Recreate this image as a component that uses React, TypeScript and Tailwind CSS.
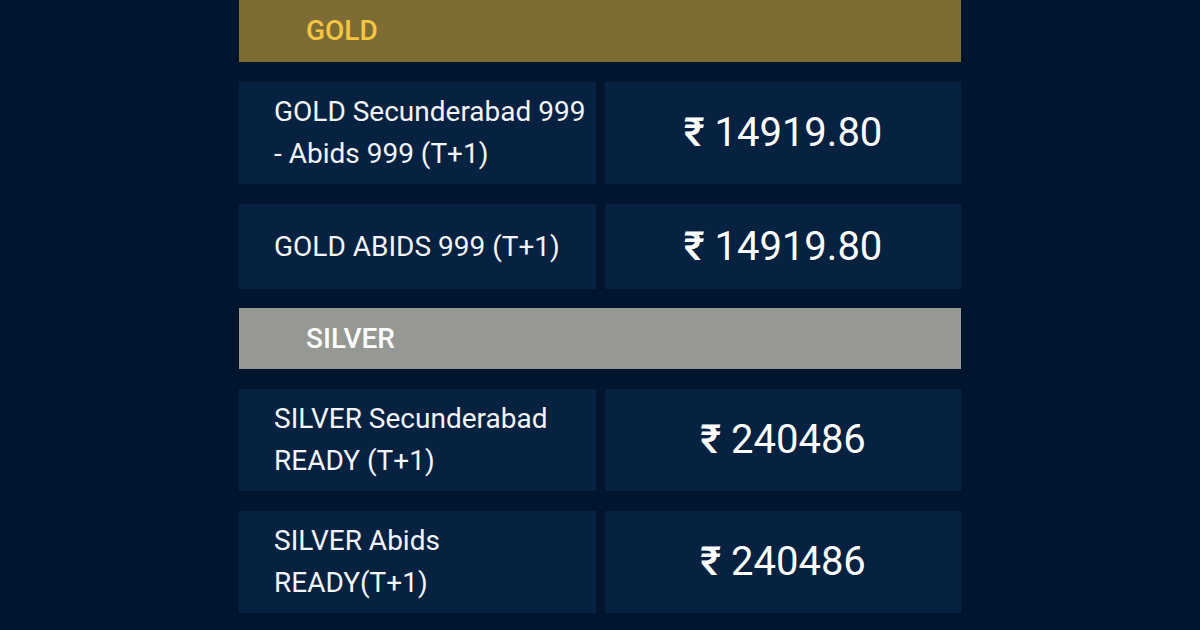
const rows = {
  gold: [
    { lines: ["GOLD Secunderabad 999", "- Abids 999 (T+1)"], price: "14919.80", h: "h-[102px]" },
    { lines: ["GOLD ABIDS 999 (T+1)"], price: "14919.80", h: "h-[85px]" },
  ],
  silver: [
    { lines: ["SILVER Secunderabad", "READY (T+1)"], price: "240486", h: "h-[102px]" },
    { lines: ["SILVER Abids", "READY(T+1)"], price: "240486", h: "h-[102px]" },
  ],
};

function Header({ title, tone }: { title: string; tone: "gold" | "silver" }) {
  return (
    <div
      className={
        tone === "gold"
          ? "flex h-[62px] items-center bg-[#7e6c35] pl-[67px] text-[28px] font-medium text-[#f5c543]"
          : "flex h-[61px] items-center bg-[#969894] pl-[67px] text-[28px] font-medium text-white"
      }
    >
      {title}
    </div>
  );
}

function RateRow({ lines, price, h }: { lines: string[]; price: string; h: string }) {
  return (
    <div className={`flex gap-[9px] ${h}`}>
      <div className="flex w-[357px] flex-col justify-center bg-[#072141] pl-[35px] text-[28px] leading-[42px] text-[#f2f4f7]">
        {lines.map((l) => (
          <span key={l} className="whitespace-nowrap">
            {l}
          </span>
        ))}
      </div>
      <div className="flex flex-1 items-center justify-center bg-[#072141] text-[40px] text-white">
        <span className="font-medium">₹</span>&nbsp;{price}
      </div>
    </div>
  );
}

export default function App() {
  return (
    <div
      className="flex h-[630px] w-[1200px] justify-center overflow-hidden bg-[#01152e]"
      style={{ fontFamily: "Roboto, 'Noto Sans', sans-serif" }}
    >
      <div className="flex w-[722px] flex-col">
        <Header title="GOLD" tone="gold" />
        <div className="mt-5 flex flex-col gap-5">
          {rows.gold.map((r) => (
            <RateRow key={r.lines[0]} {...r} />
          ))}
        </div>
        <div className="mt-[19px]">
          <Header title="SILVER" tone="silver" />
        </div>
        <div className="mt-5 flex flex-col gap-5">
          {rows.silver.map((r) => (
            <RateRow key={r.lines[0]} {...r} />
          ))}
        </div>
      </div>
    </div>
  );
}
